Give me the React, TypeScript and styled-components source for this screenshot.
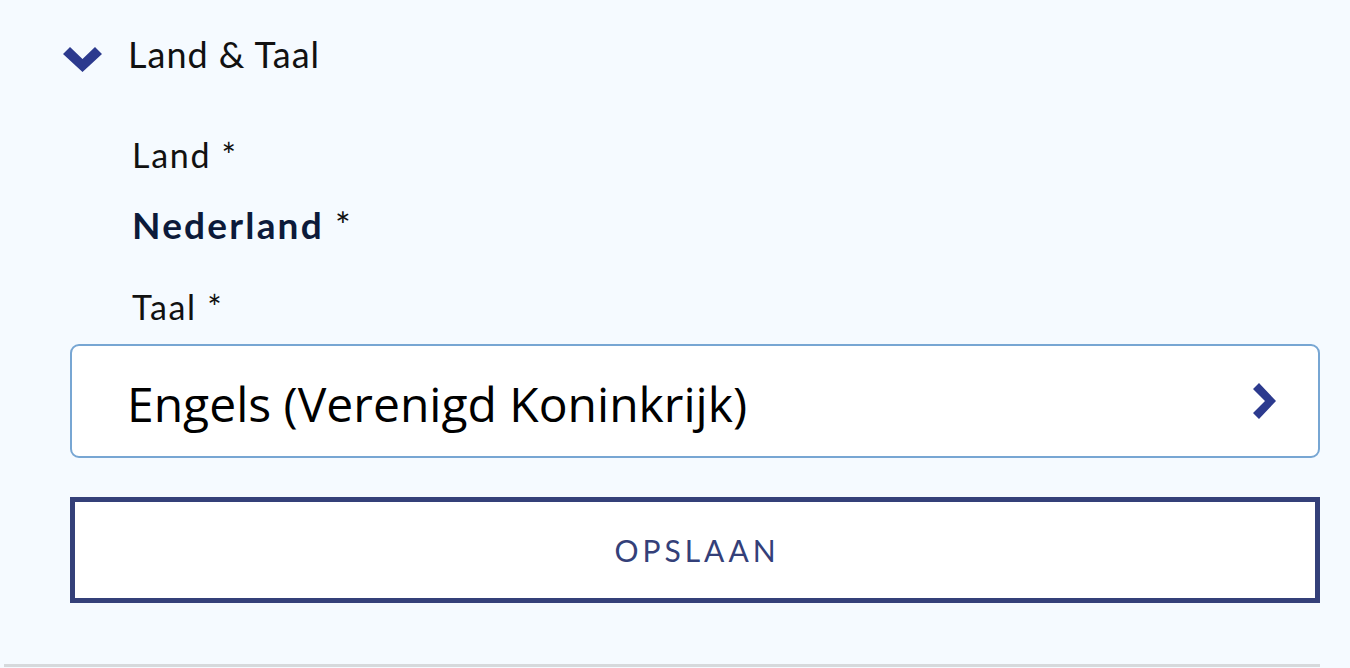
import React from "react";
import styled, { createGlobalStyle } from "styled-components";

const Global = createGlobalStyle`
  html, body {
    margin: 0;
    padding: 0;
    background: #f5faff;
  }
  body {
    font-family: Lato, "Open Sans", sans-serif;
    color: #000;
  }
`;

const Page = styled.div`
  width: 1350px;
  height: 668px;
  overflow: hidden;
  background: #f5faff;
`;

const Section = styled.section`
  margin: 0 30px 0 4px;
  padding-bottom: 61px;
  border-bottom: 3px solid #d6d9dc;
`;

const Header = styled.div`
  display: flex;
  align-items: flex-start;
  height: 110px;
  padding-left: 59px;
`;

const ChevronWrap = styled.span`
  display: block;
  margin-top: 47px;
  line-height: 0;
`;

const HeaderTitle = styled.span`
  margin-top: 33px;
  margin-left: 26px;
  font-family: Lato, sans-serif;
  font-size: 36px;
  line-height: 1.2;
  letter-spacing: 1px;
  color: #111;
`;

const Body = styled.div`
  padding-left: 66px;
  display: flex;
  flex-direction: column;
`;

const Label = styled.div<{ $gap: number }>`
  margin-top: ${(p) => p.$gap}px;
  padding-left: 62px;
  font-family: Lato, sans-serif;
  font-size: 34px;
  line-height: 1.2;
  letter-spacing: 1.7px;
  color: #111;
`;

const Value = styled.div`
  margin-top: 27px;
  padding-left: 62px;
  font-family: Lato, sans-serif;
  font-size: 37px;
  line-height: 1.2;
  font-weight: 700;
  letter-spacing: 2.2px;
  color: #0c1a3a;
`;

const Star = styled.span`
  font-weight: 400;
  color: #111;
`;

const SelectBox = styled.div`
  margin-top: 16px;
  height: 114px;
  box-sizing: border-box;
  border: 2px solid #77a6d3;
  border-radius: 9px;
  background: #fff;
  display: flex;
  align-items: center;
  justify-content: space-between;
  padding: 0 42px 0 55px;
`;

const SelectText = styled.span`
  padding-top: 5px;
  font-family: "Open Sans", sans-serif;
  font-size: 48px;
  color: #000;
`;

const SaveButton = styled.button`
  margin-top: 39px;
  height: 106px;
  box-sizing: border-box;
  border: 5px solid #344079;
  background: #fff;
  color: #344079;
  font-family: Lato, sans-serif;
  font-size: 30px;
  letter-spacing: 4px;
  padding: 0 0 0 4px;
  cursor: pointer;
`;

const ChevronDown = () => (
  <svg width="39" height="25" viewBox="0 0 39 25">
    <polygon points="0,7 7,0 19.5,12 32,0 39,7 19.5,25" fill="#2c3a8e" />
  </svg>
);

const ChevronRight = () => (
  <svg width="23" height="36" viewBox="0 0 23 36">
    <polygon points="0,6 6,0 23,18 6,36 0,30 12,18" fill="#2c3a8e" />
  </svg>
);

export default function App() {
  return (
    <Page>
      <Global />
      <Section>
        <Header>
          <ChevronWrap>
            <ChevronDown />
          </ChevronWrap>
          <HeaderTitle>Land &amp; Taal</HeaderTitle>
        </Header>
        <Body>
          <Label $gap={25}>Land *</Label>
          <Value>
            Nederland <Star>*</Star>
          </Value>
          <Label $gap={40}>Taal *</Label>
          <SelectBox>
            <SelectText>Engels (Verenigd Koninkrijk)</SelectText>
            <ChevronRight />
          </SelectBox>
          <SaveButton>OPSLAAN</SaveButton>
        </Body>
      </Section>
    </Page>
  );
}
